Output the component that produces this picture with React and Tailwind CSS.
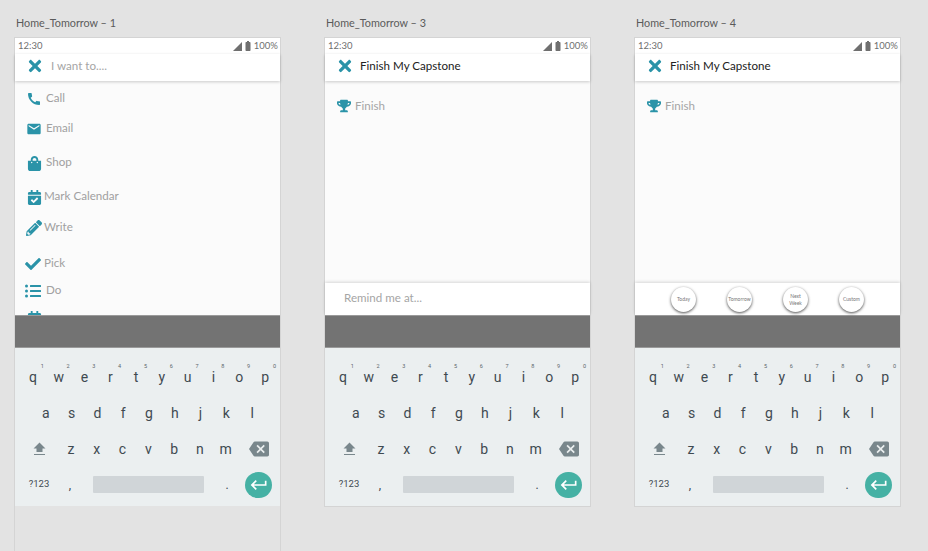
import { FaTimes, FaShoppingBag, FaPencilAlt, FaCheck, FaListUl, FaTrophy, FaCalendarCheck } from "react-icons/fa";
import { MdCall, MdEmail, MdBackspace, MdKeyboardReturn, MdBatteryFull } from "react-icons/md";

const row1 = [["q", "1"], ["w", "2"], ["e", "3"], ["r", "4"], ["t", "5"], ["y", "6"], ["u", "7"], ["i", "8"], ["o", "9"], ["p", "0"]];
const row2 = ["a", "s", "d", "f", "g", "h", "j", "k", "l"];
const row3 = ["z", "x", "c", "v", "b", "n", "m"];

const actions = [
  { label: "Call", Icon: MdCall, size: 16, row: "mt-[9px] h-[18px] pl-[11px]", text: "ml-[4px] pb-[2px]" },
  { label: "Email", Icon: MdEmail, size: 16, row: "mt-[12px] h-[18px] pl-[11px]", text: "ml-[4px] pb-[2px]" },
  { label: "Shop", Icon: FaShoppingBag, size: 15, row: "mt-[16px] h-[18px] pl-[12px]", text: "ml-[4px] pb-[2px]" },
  { label: "Mark Calendar", Icon: FaCalendarCheck, size: 15, row: "mt-[16px] h-[18px] pl-[12px]", text: "ml-[2px] pb-[2px]" },
  { label: "Write", Icon: FaPencilAlt, size: 16, row: "mt-[13px] h-[18px] pl-[11px]", text: "ml-[2px] pb-[2px]" },
  { label: "Pick", Icon: FaCheck, size: 16, row: "mt-[18px] h-[18px] pl-[10px]", text: "ml-[3px] pb-[2px]" },
  { label: "Do", Icon: FaListUl, size: 16, row: "mt-[9px] h-[18px] pl-[10px]", text: "ml-[5px] pb-[2px]" },
  { label: "", Icon: FaCalendarCheck, size: 15, row: "mt-[9px] h-[18px] pl-[12px]", text: "ml-[2px]" },
];

const StatusBar = () => (
  <div className="flex h-[16px] items-center justify-between bg-white pl-[3px] pr-[2px] text-[9.5px] text-[#6f6f6f]">
    <span>12:30</span>
    <div className="flex items-center">
      <svg width="9" height="9" viewBox="0 0 9 9" className="mr-[1px]">
        <path d="M9 0v9H0z" fill="#6f6f6f" />
      </svg>
      <MdBatteryFull size={12} color="#6f6f6f" className="-mx-[1px]" />
      <span className="ml-[1px]">100%</span>
    </div>
  </div>
);

const Header = ({ children, dim }) => (
  <div className="relative z-10 flex h-[27px] items-center bg-white pb-[3px] pl-[11px] shadow-[0_1px_3px_rgba(0,0,0,0.2)]">
    <FaTimes size={18} color="#2a93a8" />
    <span className={dim ? "ml-[7px] text-[11.6px] text-[#a5a5a5]" : "ml-[6px] text-[11.6px] text-[#222222]"}>{children}</span>
  </div>
);

const Keyboard = () => (
  <div className="h-[158px] bg-[#ebeff0] font-['Roboto',sans-serif] text-[#3f4a50]">
    <div className="ml-[5px] grid h-[46px] w-[258px] grid-cols-10 pt-[11px] text-[14px]">
      {row1.map(([k, n]) => (
        <div key={k} className="relative h-[35px] pt-[6px] text-center leading-[24px]">
          {k}
          <span className="absolute right-[2px] top-[2px] text-[5.5px] leading-[10px] text-[#5b666b]">{n}</span>
        </div>
      ))}
    </div>
    <div className="ml-[18px] mt-[1px] grid h-[36px] w-[232px] grid-cols-9 items-center text-center text-[14px]">
      {row2.map((k) => (
        <div key={k}>{k}</div>
      ))}
    </div>
    <div className="ml-[5px] flex h-[36px] items-center text-center text-[14px]">
      <div className="flex w-[38px] justify-center">
        <svg width="13" height="14" viewBox="0 0 13 14">
          <path d="M6.5 0.5L12.5 6.5H9.5V10H3.5V6.5H0.5z" fill="#79878c" />
          <path d="M1 12.5H12" stroke="#79878c" strokeWidth="1" />
        </svg>
      </div>
      {row3.map((k) => (
        <div key={k} className="w-[25.8px]">{k}</div>
      ))}
      <div className="flex w-[40px] justify-center">
        <MdBackspace size={20} color="#79878c" />
      </div>
    </div>
    <div className="ml-[4px] flex h-[35px] items-center text-center">
      <div className="w-[40px] text-[9.5px]">?123</div>
      <div className="w-[22px] text-[12px]">,</div>
      <div className="ml-[12px] h-[17px] w-[111px] rounded-[1px] bg-[#d0d5d8]"></div>
      <div className="w-[41px] pl-[5px] text-[12px]">.</div>
      <div className="flex h-[26px] w-[27px] items-center justify-center rounded-full bg-[#45b1a4]">
        <MdKeyboardReturn size={20} color="#ffffff" />
      </div>
    </div>
  </div>
);

const DarkBand = () => <div className="h-[33px] border-y border-[#9a9a9a] bg-[#737373]"></div>;

const FinishRow = () => (
  <div className="flex items-center pl-[12px] pt-[16px] text-[11.6px] text-[#a5a5a5]">
    <FaTrophy size={14} color="#2a93a8" />
    <span className="ml-[4px]">Finish</span>
  </div>
);

const BottomBar = ({ children }) => (
  <div className="h-[32px] bg-white shadow-[0_-1px_3px_rgba(0,0,0,0.15)]">{children}</div>
);

const Bubble = ({ children }) => (
  <div className="flex h-[25px] w-[25px] items-center justify-center rounded-full bg-white text-center text-[5px] leading-[7px] text-[#777777] shadow-[0_1px_3px_rgba(0,0,0,0.7)]">
    {children}
  </div>
);

const Artboard = ({ title, children }) => (
  <div className="w-[267px] shrink-0">
    <div className="h-[37px] pl-[2px] pt-[15px] text-[10.8px] leading-[15px] text-[#5a5a5a]">{title}</div>
    {children}
  </div>
);

const App = () => (
  <div className="flex h-[551px] w-[928px] gap-[43px] overflow-hidden bg-[#e3e3e3] pl-[14px] font-['Lato',sans-serif]">
    <Artboard title="Home_Tomorrow – 1">
      <div className="h-[514px] border-x border-t border-[#d4d4d4]">
        <StatusBar />
        <Header dim>I want to....</Header>
        <div className="h-[234px] overflow-hidden bg-[#fbfbfb] text-[11.6px] text-[#a0a0a0]">
          {actions.map(({ label, Icon, size, row, text }, i) => (
            <div key={i} className={`flex items-center ${row}`}>
              <Icon size={size} color="#2a93a8" />
              <span className={text}>{label}</span>
            </div>
          ))}
        </div>
        <DarkBand />
        <Keyboard />
      </div>
    </Artboard>

    <Artboard title="Home_Tomorrow – 3">
      <div className="border border-[#d4d4d4]">
        <StatusBar />
        <Header>Finish My Capstone</Header>
        <div className="h-[202px] bg-[#fbfbfb]">
          <FinishRow />
        </div>
        <BottomBar>
          <div className="pl-[19px] pt-[6px] text-[11.6px] text-[#a5a5a5]">Remind me at...</div>
        </BottomBar>
        <DarkBand />
        <Keyboard />
      </div>
    </Artboard>

    <Artboard title="Home_Tomorrow – 4">
      <div className="border border-[#d4d4d4]">
        <StatusBar />
        <Header>Finish My Capstone</Header>
        <div className="h-[202px] bg-[#fbfbfb]">
          <FinishRow />
        </div>
        <BottomBar>
          <div className="flex gap-[31px] pl-[36px] pt-[4px]">
            <Bubble>Today</Bubble>
            <Bubble>Tomorrow</Bubble>
            <Bubble>Next<br />Week</Bubble>
            <Bubble>Custom</Bubble>
          </div>
        </BottomBar>
        <DarkBand />
        <Keyboard />
      </div>
    </Artboard>
  </div>
);

export default App;
